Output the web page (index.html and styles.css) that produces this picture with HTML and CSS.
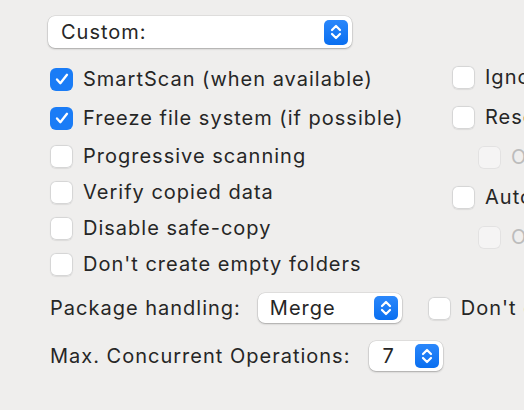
FILE: index.html
```html
<!DOCTYPE html>
<html lang="en">
<head>
    <meta charset="UTF-8">
    <title>Copy Options</title>
    <link rel="stylesheet" href="styles.css">
</head>
<body>
    <div class="panel">
        <div class="popup popup-wide">
            <span class="popup-label">Custom:</span>
            <span class="stepper">
                <svg viewBox="0 0 24 24" width="24" height="24"><path d="M8 10l4-4 4 4M8 14l4 4 4-4" fill="none" stroke="#fff" stroke-width="2.2" stroke-linecap="round" stroke-linejoin="round"/></svg>
            </span>
        </div>

        <div class="columns">
            <div class="col col-left">
                <label class="row row-first"><span class="box checked"></span>SmartScan (when available)</label>
                <label class="row row-second"><span class="box checked"></span>Freeze file system (if possible)</label>
                <label class="row"><span class="box"></span>Progressive scanning</label>
                <label class="row"><span class="box"></span>Verify copied data</label>
                <label class="row"><span class="box"></span>Disable safe-copy</label>
                <label class="row"><span class="box"></span>Don't create empty folders</label>
            </div>
            <div class="col col-right">
                <label class="row"><span class="box"></span>Ignore ownership</label>
                <label class="row"><span class="box"></span>Reset permissions</label>
                <label class="row sub disabled"><span class="box"></span>Only</label>
                <label class="row"><span class="box"></span>Auto</label>
                <label class="row sub disabled"><span class="box"></span>Only</label>
            </div>
        </div>

        <div class="field field-package">
            <span class="field-label">Package handling:</span>
            <div class="popup popup-merge">
                <span class="popup-label">Merge</span>
                <span class="stepper">
                    <svg viewBox="0 0 24 24" width="24" height="24"><path d="M8 10l4-4 4 4M8 14l4 4 4-4" fill="none" stroke="#fff" stroke-width="2.2" stroke-linecap="round" stroke-linejoin="round"/></svg>
                </span>
            </div>
            <label class="row row-inline"><span class="box"></span>Don't copy</label>
        </div>

        <div class="field field-ops">
            <span class="field-label">Max. Concurrent Operations:</span>
            <div class="popup popup-num">
                <span class="popup-label">7</span>
                <span class="stepper">
                    <svg viewBox="0 0 24 24" width="24" height="24"><path d="M8 10l4-4 4 4M8 14l4 4 4-4" fill="none" stroke="#fff" stroke-width="2.2" stroke-linecap="round" stroke-linejoin="round"/></svg>
                </span>
            </div>
        </div>
    </div>
</body>
</html>
```

FILE: styles.css
```css
body {
    margin: 0;
    background-color: #efeeed;
    font-family: 'Inter', 'Liberation Sans', sans-serif;
    font-size: 20px;
    letter-spacing: 1px;
    color: #262626;
    overflow: hidden;
    width: 524px;
    height: 410px;
}

.panel {
    padding: 16px 0 0 48px;
    white-space: nowrap;
}

/* popup buttons */
.popup {
    display: flex;
    align-items: center;
    justify-content: space-between;
    background-color: #ffffff;
    border-radius: 7px;
    box-shadow: 0 0 0 0.5px rgba(0, 0, 0, 0.12), 0 1px 2px rgba(0, 0, 0, 0.25);
    box-sizing: border-box;
    flex-shrink: 0;
}

.popup-wide {
    width: 304px;
    height: 32px;
    padding: 0 4px 0 13px;
}

.popup-merge {
    width: 144px;
    height: 30px;
    padding: 0 4px 0 12px;
    margin-left: 17px;
}

.popup-num {
    width: 74px;
    height: 30px;
    padding: 0 4px 0 13px;
    margin-left: 19px;
}

.stepper {
    display: flex;
    align-items: center;
    justify-content: center;
    width: 24px;
    height: 24px;
    border-radius: 5px;
    background: linear-gradient(#2a87fb, #0a6ff0);
}

.popup-wide .stepper {
    height: 25px;
}

/* checkboxes */
.columns {
    display: flex;
    margin-top: 19px;
}

.col {
    display: flex;
    flex-direction: column;
    flex-shrink: 0;
}

.col-left {
    width: 402px;
    margin-left: 2px;
    gap: 12px;
}

.col-right {
    gap: 16px;
    margin-top: -2px;
}

.row {
    display: flex;
    align-items: center;
    height: 24px;
}

.row-first {
    margin-bottom: 3px;
}

.row-second {
    margin-bottom: 2px;
}

.box {
    width: 23px;
    height: 23px;
    margin-right: 10px;
    border-radius: 6px;
    background-color: #ffffff;
    box-shadow: inset 0 0 0 1px #d6d6d6, 0 0.5px 1px rgba(0, 0, 0, 0.08);
    flex-shrink: 0;
}

.box.checked {
    background: #1a7cf6 url("data:image/svg+xml;utf8,<svg xmlns='http://www.w3.org/2000/svg' viewBox='0 0 24 24'><path d='M6 12.5l4 4.5 8-10' fill='none' stroke='white' stroke-width='2.8' stroke-linecap='round' stroke-linejoin='round'/></svg>") center / 20px no-repeat;
    box-shadow: none;
}

.sub {
    margin-left: 26px;
}

.disabled {
    color: #bcbcbc;
}

.disabled .box {
    background-color: #f5f4f4;
    box-shadow: inset 0 0 0 1px #e3e2e2;
}

/* bottom fields */
.field {
    display: flex;
    align-items: center;
    margin-left: 2px;
}

.field-package {
    margin-top: 17px;
}

.field-ops {
    margin-top: 18px;
}

.row-inline {
    margin-left: 26px;
}
```
